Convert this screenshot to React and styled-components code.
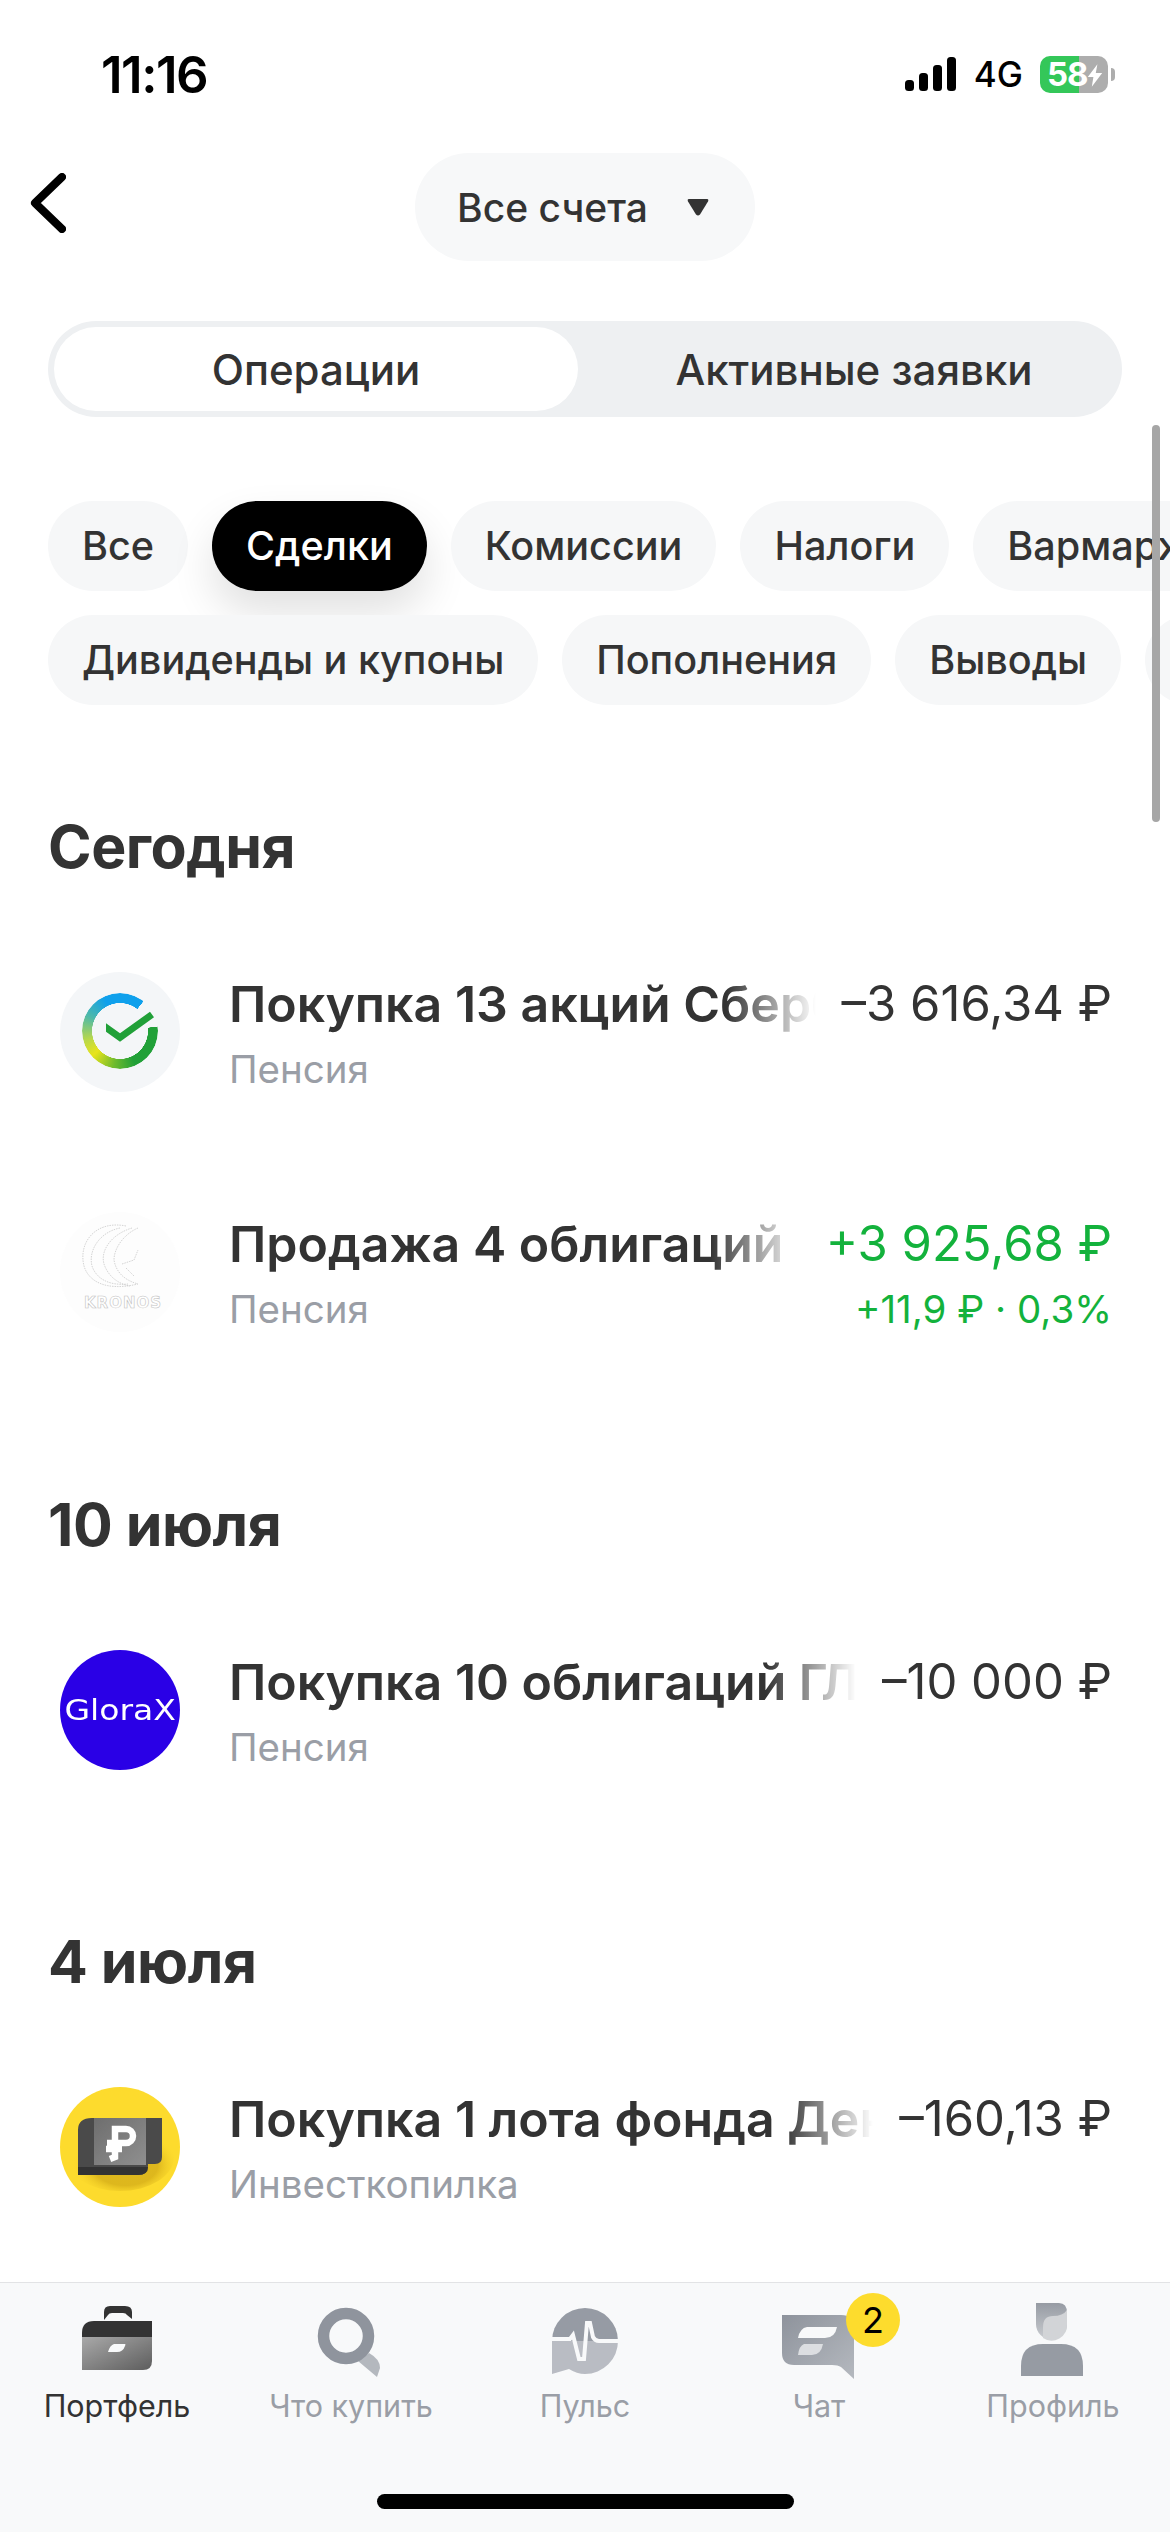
import React from 'react';
import styled, { createGlobalStyle } from 'styled-components';

const GlobalStyle = createGlobalStyle`
   html, body {
      margin: 0;
      padding: 0;
      background: #fff;
   }
   * {
      box-sizing: border-box;
   }
`;

const Page = styled.div`
   position: relative;
   display: flex;
   flex-direction: column;
   width: 1170px;
   height: 2532px;
   overflow: hidden;
   background: #fff;
   color: #333;
   font-family: Inter, 'Liberation Sans', sans-serif;
`;

const Content = styled.div`
   flex: 1;
   min-height: 0;
   overflow: hidden;
`;

const ScrollThumb = styled.div`
   position: absolute;
   left: 1152px;
   top: 425px;
   width: 8px;
   height: 397px;
   border-radius: 4px;
   background: #a6a6a6;
`;

/* status bar */
const StatusBar = styled.div`
   display: flex;
   align-items: center;
   justify-content: space-between;
   height: 148px;
   padding: 0 62px 0 101px;
`;

const Time = styled.div`
   font-size: 51px;
   font-weight: 600;
   color: #000;
   letter-spacing: -1.5px;
`;

const StatusRight = styled.div`
   display: flex;
   align-items: center;
`;

const NetLabel = styled.div`
   margin: 0 17px 0 17px;
   font-size: 35px;
   font-weight: 500;
   color: #000;
`;

const Battery = styled.div`
   position: relative;
   display: flex;
   align-items: center;
   width: 68px;
   height: 37px;
   padding-left: 7px;
   border-radius: 10px;
   background: linear-gradient(90deg, #34c759 0 39px, #adadad 39px);
   color: #fff;
   font-size: 33px;
   font-weight: 700;
   letter-spacing: -1px;
   &::after {
      content: '';
      position: absolute;
      right: -7px;
      top: 12px;
      width: 4px;
      height: 13px;
      border-radius: 0 5px 5px 0;
      background: #adadad;
   }
`;

const BatteryBolt = styled.svg`
   position: absolute;
   left: 47px;
   top: 7px;
`;

/* header */
const Header = styled.div`
   display: grid;
   grid-template-columns: 1fr auto 1fr;
   align-items: center;
   height: 108px;
   margin-top: 5px;
   padding: 0 30px;
`;

const BackSvg = styled.svg`
   margin-bottom: 8px;
`;

const AccountPill = styled.div`
   display: flex;
   align-items: center;
   gap: 39px;
   height: 108px;
   padding: 0 46px 0 42px;
   border-radius: 54px;
   background: #f7f8f9;
   font-size: 39px;
   font-weight: 500;
`;

/* segment */
const Segment = styled.div`
   display: grid;
   grid-template-columns: 524px 1fr;
   align-items: center;
   height: 96px;
   margin: 60px 48px 0;
   padding: 0 6px;
   border-radius: 48px;
   background: #eef0f2;
`;

const SegmentItem = styled.div`
   display: flex;
   align-items: center;
   justify-content: center;
   height: 84px;
   padding-left: ${(p) => (p.$active ? '0' : '14px')};
   border-radius: 42px;
   background: ${(p) => (p.$active ? '#fff' : 'transparent')};
   font-size: 42px;
   font-weight: 500;
`;

/* chips */
const ChipRows = styled.div`
   display: flex;
   flex-direction: column;
   gap: 24px;
   margin-top: 84px;
   padding-left: 48px;
`;

const ChipRow = styled.div`
   display: flex;
   gap: 24px;
`;

const Chip = styled.div`
   flex: none;
   display: flex;
   align-items: center;
   height: 90px;
   padding: 0 34px;
   border-radius: 45px;
   background: ${(p) => (p.$active ? '#000' : '#f6f7f8')};
   color: ${(p) => (p.$active ? '#fff' : '#333')};
   box-shadow: ${(p) => (p.$active ? '0 22px 44px rgba(0, 0, 0, 0.12)' : 'none')};
   font-size: 39.6px;
   font-weight: 500;
`;

/* operations */
const Section = styled.div`
   margin-top: ${(p) => p.$top}px;
`;

const DayTitle = styled.div`
   height: 66px;
   margin-bottom: 32px;
   padding-left: 48px;
   font-size: 59px;
   font-weight: 700;
   line-height: 66px;
   letter-spacing: -0.5px;
`;

const Row = styled.div`
   display: flex;
   align-items: center;
   gap: 49px;
   height: 240px;
   padding: 0 58px 0 60px;
`;

const RowIcon = styled.div`
   position: relative;
   flex: none;
   display: flex;
   align-items: center;
   justify-content: center;
   width: 120px;
   height: 120px;
   border-radius: 50%;
   overflow: hidden;
   background: ${(p) => p.$bg};
`;

const RowBody = styled.div`
   flex: 1;
   min-width: 0;
`;

const RowLine = styled.div`
   display: flex;
   align-items: center;
   justify-content: space-between;
   gap: 26px;
`;

const RowTitle = styled.div`
   flex: 1;
   min-width: 0;
   height: 64px;
   overflow: hidden;
   white-space: nowrap;
   font-size: 50px;
   font-weight: 600;
   line-height: 64px;
   mask-image: linear-gradient(90deg, #000 calc(100% - 90px), transparent);
`;

const RowAmount = styled.div`
   flex: none;
   font-size: 49px;
   line-height: 64px;
   color: ${(p) => (p.$plus ? '#13b23c' : '#333')};
`;

const RowSub = styled.div`
   margin-top: 9px;
   font-size: 38.5px;
   line-height: 48px;
   color: #9a9ea6;
`;

const RowExtra = styled(RowSub)`
   color: #13b23c;
`;

const SberRing = styled.div`
   position: absolute;
   left: 22px;
   top: 21px;
   width: 76px;
   height: 76px;
   border-radius: 50%;
   background: conic-gradient(
      #0fa0ec 0deg,
      #0fa0ec 38deg,
      transparent 38.5deg,
      transparent 83deg,
      #21a038 83.5deg,
      #21a038 155deg,
      #6fbb2e 190deg,
      #e8e41c 228deg,
      #b9d84a 255deg,
      #4fb9a8 295deg,
      #0fa0ec 335deg
   );
   mask-image: radial-gradient(closest-side, transparent 73%, #000 74%);
`;

const SberCheck = styled.svg`
   position: absolute;
   left: 0;
   top: 0;
`;

const GloraText = styled.span`
   color: #fff;
   font-family: 'DejaVu Sans', sans-serif;
   font-size: 28px;
   transform: scaleX(1.18);
`;

/* tab bar */
const TabBar = styled.div`
   position: relative;
   flex: none;
   display: grid;
   grid-template-columns: repeat(5, 1fr);
   align-content: start;
   height: 250px;
   padding-top: 18px;
   border-top: 1px solid #e2e3e5;
   background: #f8f9fa;
`;

const Tab = styled.div`
   display: flex;
   flex-direction: column;
   align-items: center;
   color: ${(p) => (p.$active ? '#333' : '#9a9ea6')};
   font-size: 30.5px;
   line-height: 40px;
`;

const TabIconBox = styled.div`
   position: relative;
   width: 80px;
   height: 80px;
   margin-bottom: 5px;
`;

const Badge = styled.div`
   position: absolute;
   left: 67px;
   top: -8px;
   display: flex;
   align-items: center;
   justify-content: center;
   width: 54px;
   height: 54px;
   border-radius: 50%;
   background: #fddc2d;
   color: #000;
   font-size: 36px;
`;

const HomeIndicator = styled.div`
   position: absolute;
   left: 377px;
   top: 211px;
   width: 417px;
   height: 15px;
   border-radius: 8px;
   background: #000;
`;

const SignalIcon = () => (
   <svg width="52" height="34" viewBox="0 0 52 34">
      <rect x="0" y="23" width="9" height="11" rx="3.5" fill="#000" />
      <rect x="14" y="16" width="9" height="18" rx="3.5" fill="#000" />
      <rect x="28" y="8" width="9" height="26" rx="3.5" fill="#000" />
      <rect x="42" y="0" width="9" height="34" rx="3.5" fill="#000" />
   </svg>
);

const BackIcon = () => (
   <BackSvg width="36" height="60" viewBox="0 0 36 60">
      <path d="M32 4 L5 30 L32 56" fill="none" stroke="#000" strokeWidth="8" strokeLinecap="round" strokeLinejoin="round" />
   </BackSvg>
);

const CaretIcon = () => (
   <svg width="22" height="17" viewBox="0 0 22 17">
      <path d="M2 0 H20 Q22 0 21 2.5 L13 15.5 Q11 17.5 9 15.5 L1 2.5 Q0 0 2 0 Z" fill="#333" />
   </svg>
);

const SberLogo = () => (
   <>
      <SberRing />
      <SberCheck width="120" height="120" viewBox="0 0 120 120">
         <path d="M46 51.3 L60 61.3 L90 39.7 L94 45.3 L60 69.7 L46 59.7 Z" fill="#21a038" />
      </SberCheck>
   </>
);

const KronosLogo = () => (
   <svg width="120" height="120" viewBox="0 0 120 120">
      <g fill="none" stroke="#c9c9c9" strokeWidth="0.8" strokeDasharray="1.5 1">
         <path d="M66 14 C36 8 18 30 24 54 C28 68 44 80 78 72" />
         <path d="M60 16 C40 20 28 38 32 54 C36 66 48 74 68 72" />
         <path d="M72 16 C52 22 40 38 44 52 C48 64 58 72 70 74" />
         <path d="M78 16 C64 22 54 36 54 48 C56 60 64 68 78 72" />
         <path d="M62 52 L74 48 L78 38 M66 56 L74 64" />
      </g>
      <text x="63" y="96" textAnchor="middle" fontFamily="'DejaVu Sans', sans-serif" fontSize="15" fontWeight="700" letterSpacing="1" fill="#fff" stroke="#c4c4c4" strokeWidth="0.6">KRONOS</text>
   </svg>
);

const PiggyLogo = () => (
   <svg width="120" height="120" viewBox="0 0 120 120">
      <defs>
         <linearGradient id="piggyPanel" x1="0" y1="0" x2="1" y2="1">
            <stop offset="0" stopColor="#6e6e6e" />
            <stop offset="1" stopColor="#8f8f8f" />
         </linearGradient>
         <radialGradient id="piggyShade" cx="0.55" cy="0.62" r="0.5">
            <stop offset="0.6" stopColor="#c49a10" stopOpacity="0.55" />
            <stop offset="1" stopColor="#fddb2d" stopOpacity="0" />
         </radialGradient>
      </defs>
      <ellipse cx="60" cy="70" rx="54" ry="34" fill="url(#piggyShade)" />
      <path d="M32 31 H102 V70 Q102 77 95 77 H88 V79 Q88 88 78 88 H18 V43 Q18 31 32 31 Z" fill="#4a4a4a" />
      <path d="M18 80 H88 Q88 88 78 88 H18 Z" fill="#333" />
      <rect x="34" y="31" width="52" height="47" fill="url(#piggyPanel)" />
      <path d="M55 62 V42 H66 A7 7 0 0 1 66 56 H47 M46 62 H62 M55 62 V70 L50 72" fill="none" stroke="#fff" strokeWidth="6.5" />
   </svg>
);

const PortfolioIcon = () => (
   <svg width="80" height="80" viewBox="0 0 80 80">
      <defs>
         <linearGradient id="caseBody" x1="0" y1="0" x2="1" y2="1">
            <stop offset="0" stopColor="#a9a9a9" />
            <stop offset="1" stopColor="#5d5d5d" />
         </linearGradient>
      </defs>
      <path d="M27 19 V11 Q27 5 33 5 H48 Q55 5 55 11 V18 L50 14 Q49 12 46 12 H35 Q32 12 31 14 Z" fill="#333" />
      <path d="M5 36 V32 Q5 20 17 20 H75 V36 Z" fill="#333" />
      <path d="M5 36 H75 V60 Q75 69 66 69 H5 Z" fill="url(#caseBody)" />
      <path d="M37 43 H48 Q49 43 48 45 Q46 51 40 51 H31 Q33 44 37 43 Z" fill="#f8f9fa" />
   </svg>
);

const SearchIcon = () => (
   <svg width="80" height="80" viewBox="0 0 80 80">
      <path d="M47 60 L58 52 Q69 58 69 67 L66 76 Z" fill="#b4b8be" />
      <circle cx="35" cy="35" r="22.5" fill="none" stroke="#8f949d" strokeWidth="11.5" />
   </svg>
);

const PulseIcon = () => (
   <svg width="80" height="80" viewBox="0 0 80 80">
      <path d="M7 40 A33 33 0 0 1 73 40 Z" fill="#969ba4" />
      <path d="M7 40 H73 A33 33 0 0 1 40 73 Q32 73 24 68 L7 73 Z" fill="#b9bcc3" />
      <path d="M7 38 H25 L28 34 L34 58 H39 L42 22 H45 L48 36 Q50 40 54 40 H73" fill="none" stroke="#f8f9fa" strokeWidth="4" />
   </svg>
);

const ChatIcon = () => (
   <svg width="80" height="80" viewBox="0 0 80 80">
      <defs>
         <linearGradient id="chatBody" x1="0" y1="0" x2="1" y2="1">
            <stop offset="0" stopColor="#8e939c" />
            <stop offset="1" stopColor="#b5b9bf" />
         </linearGradient>
      </defs>
      <path d="M3 14 H62 Q75 14 75 27 V78 L62 66 Q59 64 53 64 H15 Q3 64 3 52 Z" fill="url(#chatBody)" />
      <path d="M28 26 H58 Q56 37 46 37 H19 Q21 27 28 26 Z" fill="#f8f9fa" />
      <path d="M25 43 H44 Q42 54 33 54 H19 Q20 45 25 43 Z" fill="#dcdee1" />
   </svg>
);

const ProfileIcon = () => (
   <svg width="80" height="80" viewBox="0 0 80 80">
      <defs>
         <linearGradient id="headTop" x1="0" y1="0" x2="0" y2="1">
            <stop offset="0" stopColor="#969ba3" />
            <stop offset="1" stopColor="#c9ccd0" />
         </linearGradient>
      </defs>
      <path d="M23 2 H46 Q54 2 54 12 V23 A15.5 15.5 0 0 1 23 23 Z" fill="url(#headTop)" />
      <path d="M30 26 Q30 15 40 15 Q50 15 54 9 V23 A15.5 15.5 0 0 1 30 37 Z" fill="#d2d4d7" />
      <path d="M8 75 V65 Q8 43 30 43 H48 Q70 43 70 65 V75 Z" fill="#969ba3" />
   </svg>
);

const chipsTop = [
   { label: 'Все' },
   { label: 'Сделки', active: true },
   { label: 'Комиссии' },
   { label: 'Налоги' },
   { label: 'Вармаржа' },
];

const chipsBottom = [{ label: 'Дивиденды и купоны' }, { label: 'Пополнения' }, { label: 'Выводы' }, { label: 'Прочее' }];

const days = [
   {
      title: 'Сегодня',
      top: 109,
      rows: [
         { logo: <SberLogo />, bg: '#f4f6f8', title: 'Покупка 13 акций Сбербанк', amount: '–3 616,34 ₽', sub: 'Пенсия' },
         {
            logo: <KronosLogo />,
            bg: '#fdfdfd',
            title: 'Продажа 4 облигаций Кронос',
            amount: '+3 925,68 ₽',
            plus: true,
            sub: 'Пенсия',
            extra: '+11,9 ₽ · 0,3%',
         },
      ],
   },
   {
      title: '10 июля',
      top: 100,
      rows: [{ logo: <GloraText>GloraX</GloraText>, bg: '#2a00e6', title: 'Покупка 10 облигаций ГЛОРАКС', amount: '–10 000 ₽', sub: 'Пенсия' }],
   },
   {
      title: '4 июля',
      top: 99,
      rows: [{ logo: <PiggyLogo />, bg: '#fddb2d', title: 'Покупка 1 лота фонда Денежный', amount: '–160,13 ₽', sub: 'Инвесткопилка' }],
   },
];

const tabs = [
   { label: 'Портфель', icon: <PortfolioIcon />, active: true },
   { label: 'Что купить', icon: <SearchIcon /> },
   { label: 'Пульс', icon: <PulseIcon /> },
   { label: 'Чат', icon: <ChatIcon />, badge: 2 },
   { label: 'Профиль', icon: <ProfileIcon /> },
];

const App = () => {
   return (
      <Page>
         <GlobalStyle />
         <Content>
            <StatusBar>
               <Time>11:16</Time>
               <StatusRight>
                  <SignalIcon />
                  <NetLabel>4G</NetLabel>
                  <Battery>
                     58
                     <BatteryBolt width="16" height="25" viewBox="0 0 20 28">
                        <path d="M13 0 L1 16 H8 L6 28 L19 11 H11 Z" fill="#fff" />
                     </BatteryBolt>
                  </Battery>
               </StatusRight>
            </StatusBar>
            <Header>
               <BackIcon />
               <AccountPill>
                  Все счета
                  <CaretIcon />
               </AccountPill>
            </Header>
            <Segment>
               <SegmentItem $active>Операции</SegmentItem>
               <SegmentItem>Активные заявки</SegmentItem>
            </Segment>
            <ChipRows>
               <ChipRow>
                  {chipsTop.map((c) => (
                     <Chip key={c.label} $active={c.active}>
                        {c.label}
                     </Chip>
                  ))}
               </ChipRow>
               <ChipRow>
                  {chipsBottom.map((c) => (
                     <Chip key={c.label}>{c.label}</Chip>
                  ))}
               </ChipRow>
            </ChipRows>
            {days.map((day) => (
               <Section key={day.title} $top={day.top}>
                  <DayTitle>{day.title}</DayTitle>
                  {day.rows.map((row) => (
                     <Row key={row.title}>
                        <RowIcon $bg={row.bg}>{row.logo}</RowIcon>
                        <RowBody>
                           <RowLine>
                              <RowTitle>{row.title}</RowTitle>
                              <RowAmount $plus={row.plus}>{row.amount}</RowAmount>
                           </RowLine>
                           <RowLine>
                              <RowSub>{row.sub}</RowSub>
                              {row.extra && <RowExtra>{row.extra}</RowExtra>}
                           </RowLine>
                        </RowBody>
                     </Row>
                  ))}
               </Section>
            ))}
         </Content>
         <TabBar>
            {tabs.map((tab) => (
               <Tab key={tab.label} $active={tab.active}>
                  <TabIconBox>
                     {tab.icon}
                     {tab.badge && <Badge>{tab.badge}</Badge>}
                  </TabIconBox>
                  {tab.label}
               </Tab>
            ))}
            <HomeIndicator />
         </TabBar>
         <ScrollThumb />
      </Page>
   );
};

export default App;
